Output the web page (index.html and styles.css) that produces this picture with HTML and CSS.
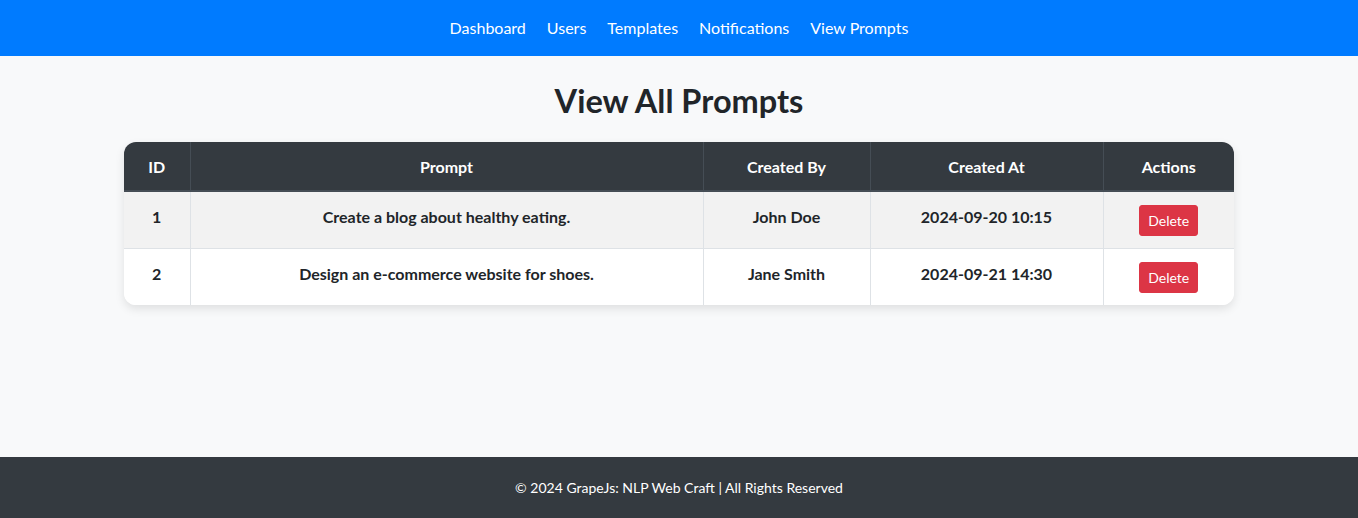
FILE: index.html
```html
<!DOCTYPE html>
<html lang="en">
<head>
<meta charset="utf-8">
<title>View All Prompts</title>
<link rel="stylesheet" href="styles.css">
</head>
<body>
<nav class="topnav">
  <a class="nav-link" href="#">Dashboard</a>
  <a class="nav-link" href="#">Users</a>
  <a class="nav-link" href="#">Templates</a>
  <a class="nav-link" href="#">Notifications</a>
  <a class="nav-link" href="#">View Prompts</a>
</nav>
<main class="main">
  <h1 class="title">View All Prompts</h1>
  <div class="table-wrap">
    <table class="prompts">
      <colgroup>
        <col class="c-id"><col class="c-prompt"><col class="c-by"><col class="c-at"><col class="c-act">
      </colgroup>
      <thead>
        <tr><th>ID</th><th>Prompt</th><th>Created By</th><th>Created At</th><th>Actions</th></tr>
      </thead>
      <tbody>
        <tr class="odd">
          <td>1</td><td>Create a blog about healthy eating.</td><td>John Doe</td><td>2024-09-20 10:15</td>
          <td><button class="btn-del">Delete</button></td>
        </tr>
        <tr>
          <td>2</td><td>Design an e-commerce website for shoes.</td><td>Jane Smith</td><td>2024-09-21 14:30</td>
          <td><button class="btn-del">Delete</button></td>
        </tr>
      </tbody>
    </table>
  </div>
</main>
<footer class="footer">© 2024 GrapeJs: NLP Web Craft | All Rights Reserved</footer>
</body>
</html>
```
FILE: styles.css
```css
* { box-sizing: border-box; }
html, body { margin: 0; padding: 0; }
body {
  font-family: "Lato", "Noto Sans", "Liberation Sans", sans-serif;
  font-size: 16px;
  line-height: 1.5;
  color: #212529;
  background: #f8f9fa;
  min-height: 100vh;
  display: flex;
  flex-direction: column;
}
.topnav {
  background: #007bff;
  height: 56px;
  display: flex;
  justify-content: center;
  align-items: center;
}
.nav-link {
  color: #fff;
  text-decoration: none;
  padding: 8px 10.5px;
  font-size: 16px;
}
.main {
  flex: 1;
  padding-top: 26px;
}
.title {
  margin: 0 0 22px;
  text-align: center;
  font-size: 32.5px;
  font-weight: 700;
  line-height: 38px;
  color: #212529;
}
.table-wrap {
  width: 1110px;
  margin: 0 auto;
  border-radius: 12px;
  overflow: hidden;
  box-shadow: 0 4px 10px rgba(0,0,0,0.1);
  background: #fff;
}
.prompts {
  width: 100%;
  border-collapse: collapse;
  table-layout: fixed;
  text-align: center;
}
.c-id { width: 66px; }
.c-prompt { width: 513px; }
.c-by { width: 167px; }
.c-at { width: 233px; }
.c-act { width: 131px; }
.prompts th {
  background: #343a40;
  color: #fff;
  font-weight: 700;
  padding: 13px 12px 11px;
  border: 1px solid #454d55;
  border-top: 0;
  border-bottom: 2px solid #454d55;
  vertical-align: top;
}
.prompts td {
  padding: 13px 12px 12px;
  border: 1px solid #dee2e6;
  vertical-align: top;
  font-weight: 700;
  color: #212529;
  background: #fff;
}
.prompts tr.odd td { background: #f2f2f2; }
.prompts tr > :first-child { border-left: 0; }
.prompts tr > :last-child { border-right: 0; }
.prompts tbody tr:last-child td { border-bottom: 0; }
.btn-del {
  font-family: inherit;
  background: #dc3545;
  color: #fff;
  border: 1px solid #dc3545;
  border-radius: 3px;
  font-size: 14px;
  line-height: 21px;
  padding: 4px 8px;
  cursor: pointer;
}
.footer {
  background: #343a40;
  color: #fff;
  text-align: center;
  font-size: 14px;
  line-height: 21px;
  padding: 20px 0;
}
```
